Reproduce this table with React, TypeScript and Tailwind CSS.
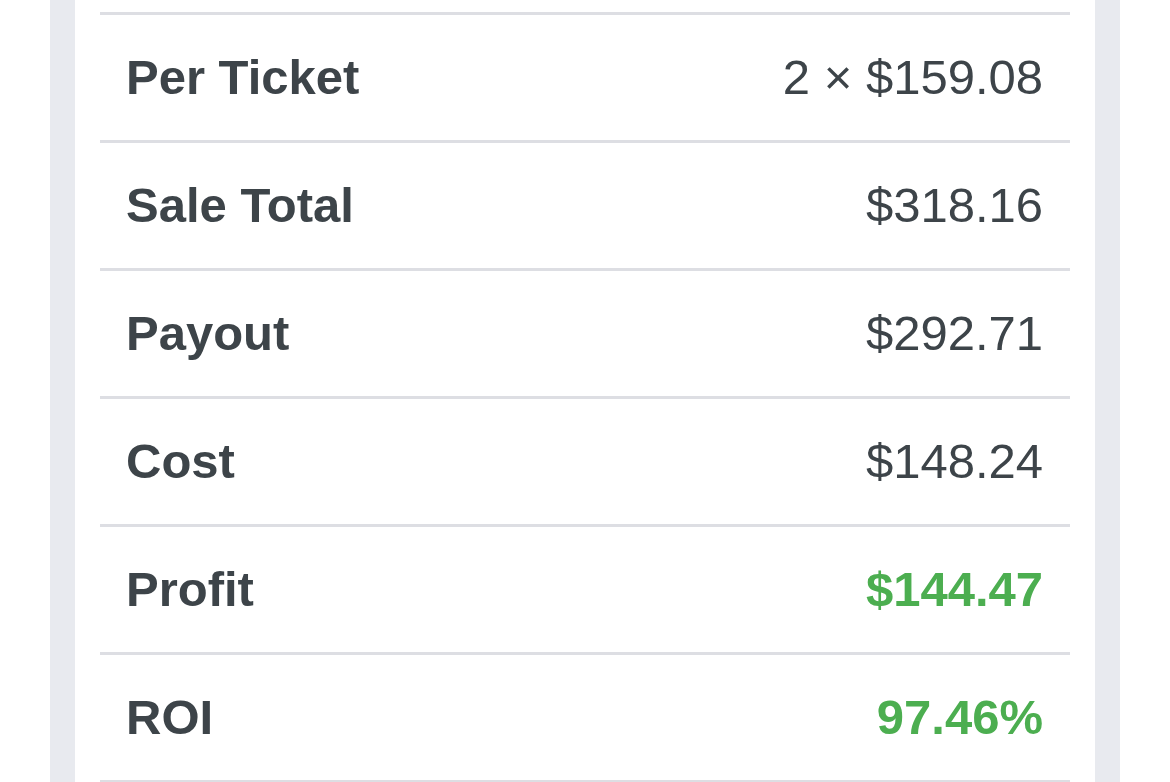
import React, { FC } from "react";

interface IRow {
  label: string;
  value: string;
  good?: boolean;
}

const rows: IRow[] = [
  { label: "Per Ticket", value: "2 × $159.08" },
  { label: "Sale Total", value: "$318.16" },
  { label: "Payout", value: "$292.71" },
  { label: "Cost", value: "$148.24" },
  { label: "Profit", value: "$144.47", good: true },
  { label: "ROI", value: "97.46%", good: true },
];

const Row: FC<{ row: IRow }> = ({ row }) => (
  <li className="flex h-[128px] items-center justify-between border-b-[3px] border-[#dddee3] pl-[26px] pr-[27px]">
    <span className="text-[49px] font-bold text-[#3d4449]">{row.label}</span>
    <span
      className={
        row.good
          ? "text-[49px] font-bold text-[#4cae50]"
          : "text-[49px] text-[#3d4449]"
      }
    >
      {row.value}
    </span>
  </li>
);

const App: FC = () => {
  return (
    <div
      className="flex h-[782px] w-[1170px] overflow-hidden bg-white px-[50px]"
      style={{ fontFamily: '"Liberation Sans", Arial, sans-serif' }}
    >
      <div className="flex flex-1 bg-[#e8eaef] px-[25px]">
        <div className="flex-1 bg-white px-[25px] pt-[12px]">
          <ul className="border-t-[3px] border-[#dddee3]">
            {rows.map((row, index) => (
              <Row key={index} row={row} />
            ))}
          </ul>
        </div>
      </div>
    </div>
  );
};

export default App;
